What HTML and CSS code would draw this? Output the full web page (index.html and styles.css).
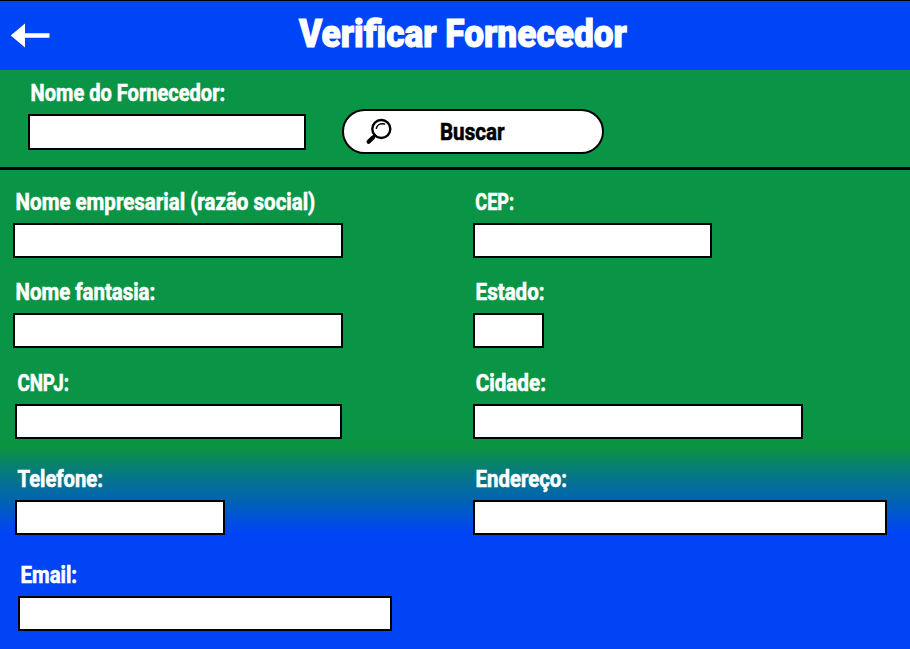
FILE: index.html
```html
<!DOCTYPE html>
<html lang="pt-BR">
<head>
<meta charset="utf-8">
<title>Verificar Fornecedor</title>
<link rel="stylesheet" href="styles.css">
</head>
<body>
<header class="topbar">
  <a class="back" href="#" aria-label="Voltar"><svg width="40" height="26" viewBox="0 0 40 26"><path d="M-.2 12.5 14 .5V10.2H38.5v4.6H14v9.7z" fill="#fff"/></svg></a>
  <h1 class="title"><span>Verificar Fornecedor</span></h1>
</header>
<form class="search">
  <div class="field w278"><label class="t-nf" for="nf">Nome do Fornecedor:</label><input id="nf"></div>
  <button class="go" type="button"><svg width="28" height="28" viewBox="0 0 28 28" fill="none" stroke="#000" stroke-linecap="round"><circle cx="16.3" cy="11" r="9" stroke-width="2.4"/><path d="M10 17.5 7.5 20" stroke-width="2.5"/><path d="m8 19.5-4.4 4.3" stroke-width="4.2"/><path d="M11.3 10.3c.7-3.2 3.8-5.2 8.2-4.3" stroke-width="1.5"/></svg><span>Buscar</span></button>
</form>
<form class="details">
  <div class="column">
    <div class="field w330"><label class="t-ne" for="ne">Nome empresarial (razão social)</label><input id="ne"></div>
    <div class="field w330"><label class="t-fa" for="fa">Nome fantasia:</label><input id="fa"></div>
    <div class="field w327 in2"><label class="t-cn" for="cn">CNPJ:</label><input id="cn"></div>
    <div class="field w210 in2"><label class="t-te" for="te">Telefone:</label><input id="te"></div>
    <div class="field w374 in5"><label class="t-em" for="em">Email:</label><input id="em"></div>
  </div>
  <div class="column">
    <div class="field w239"><label class="t-ce" for="ce">CEP:</label><input id="ce"></div>
    <div class="field w71"><label class="t-es" for="es">Estado:</label><input id="es"></div>
    <div class="field w330"><label class="t-ci" for="ci">Cidade:</label><input id="ci"></div>
    <div class="field w414"><label class="t-en" for="en">Endereço:</label><input id="en"></div>
  </div>
</form>
</body>
</html>
```
FILE: styles.css
```css
* { box-sizing: border-box; }
body {
  margin: 0;
  height: 649px;
  overflow: hidden;
  font: 700 23.5px/24px Roboto, sans-serif;
  color: #fff;
  background: linear-gradient(#0a9446 0, #0a9446 435px, #0a943f 446px, #04758a 478px, #0160b8 504px, #0044f6 533px);
}
.topbar {
  display: grid;
  grid-template-columns: 288px 1fr;
  align-items: center;
  height: 70px;
  padding-left: 11px;
  border-top: 1px solid #000;
  background: #0044f8;
}
.back { display: block; height: 26px; }
.title {
  margin: 0;
  padding-bottom: 4px;
  font: 900 38px/44px Roboto, sans-serif;
  white-space: nowrap;
  -webkit-text-stroke: 1px #fff;
}
.title span { display: inline-block; transform: scaleX(.927); transform-origin: left; }
.search {
  display: flex;
  gap: 36px;
  height: 100px;
  padding: 11px 0 0 28px;
  border-bottom: 3px solid #000;
}
.field { display: flex; flex-direction: column; gap: 9px; height: 68px; }
.field label {
  align-self: flex-start;
  padding-left: 3px;
  white-space: nowrap;
  transform: scaleX(var(--fit));
  transform-origin: left;
  -webkit-text-stroke: .6px currentColor;
}
/* Horizontal condensing of each caption */
.t-nf { --fit: .853; }
.t-ne { --fit: .872; }
.t-fa { --fit: .868; }
.t-cn { --fit: .797; }
.t-te { --fit: .86; }
.t-em { --fit: .866; }
.t-ce { --fit: .77; }
.t-es { --fit: .873; }
.t-ci { --fit: .88; }
.t-en { --fit: .866; }
.field input {
  width: 100%;
  height: 35px;
  padding: 0 6px;
  border: 2px solid #000;
  border-radius: 0;
  background: #fff;
}
.search .field input { height: 36px; flex: none; }
.go {
  display: flex;
  align-items: center;
  width: 262px;
  height: 45px;
  margin-top: 28px;
  padding: 0 0 0 21px;
  border: 2px solid #000;
  border-radius: 23px;
  background: #fff;
  color: #000;
  font: inherit;
}
.go span {
  margin-left: 47px;
  transform: scaleX(.875);
  transform-origin: left;
  -webkit-text-stroke: .6px currentColor;
}
.details { display: grid; grid-template-columns: 460.5px 1fr; padding: 19.6px 0 0 12.5px; }
.column { display: flex; flex-direction: column; gap: 22.5px; }
.column .field:nth-child(n+4) { margin-top: 5.5px; }
.in2 { margin-left: 2.5px; }
.in5 { margin-left: 5px; }
.w71 { width: 71px; }
.w210 { width: 210px; }
.w239 { width: 239px; }
.w278 { width: 278px; }
.w327 { width: 327px; }
.w330 { width: 330px; }
.w374 { width: 374px; }
.w414 { width: 414px; }
```
